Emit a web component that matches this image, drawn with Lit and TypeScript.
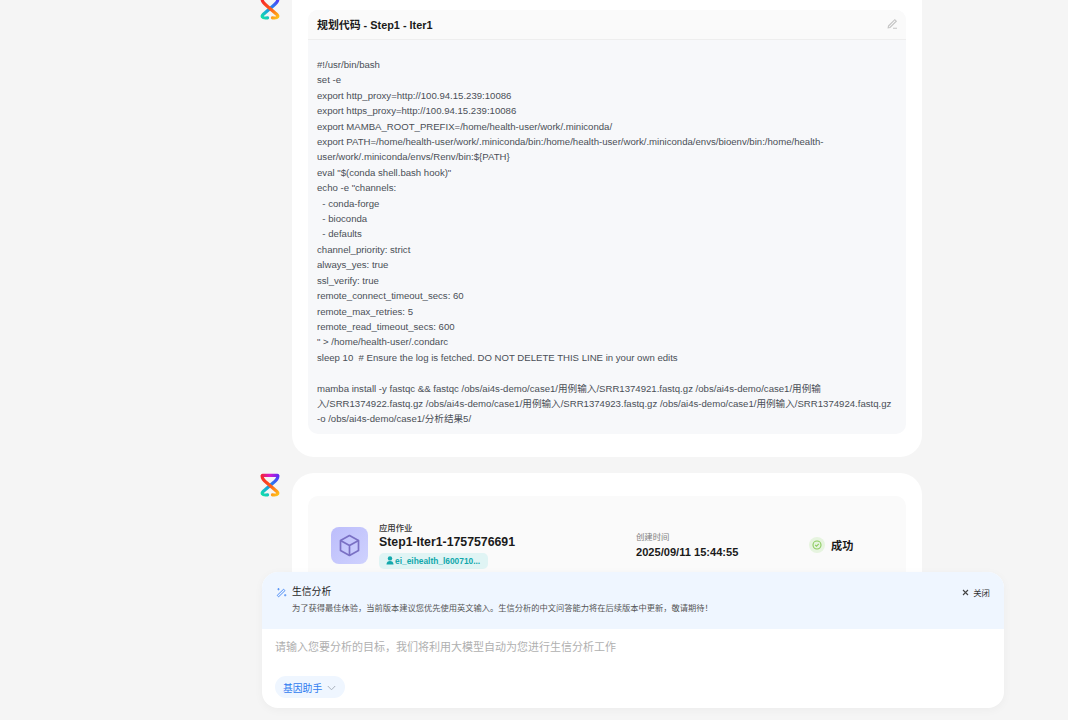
import { LitElement, html, css, svg } from "lit";
import { customElement } from "lit/decorators.js";

const CODE = `#!/usr/bin/bash
set -e
export http_proxy=http://100.94.15.239:10086
export https_proxy=http://100.94.15.239:10086
export MAMBA_ROOT_PREFIX=/home/health-user/work/.miniconda/
export PATH=/home/health-user/work/.miniconda/bin:/home/health-user/work/.miniconda/envs/bioenv/bin:/home/health-user/work/.miniconda/envs/Renv/bin:\${PATH}
eval "$(conda shell.bash hook)"
echo -e "channels:
  - conda-forge
  - bioconda
  - defaults
channel_priority: strict
always_yes: true
ssl_verify: true
remote_connect_timeout_secs: 60
remote_max_retries: 5
remote_read_timeout_secs: 600
" > /home/health-user/.condarc
sleep 10  # Ensure the log is fetched. DO NOT DELETE THIS LINE in your own edits

mamba install -y fastqc && fastqc /obs/ai4s-demo/case1/用例输入/SRR1374921.fastq.gz /obs/ai4s-demo/case1/用例输入/SRR1374922.fastq.gz /obs/ai4s-demo/case1/用例输入/SRR1374923.fastq.gz /obs/ai4s-demo/case1/用例输入/SRR1374924.fastq.gz -o /obs/ai4s-demo/case1/分析结果5/`;

const logo = (id: string) => html`<svg class="logo" viewBox="0 0 20 24" width="20" height="24" fill="none" stroke-width="3.2" stroke-linecap="round" stroke-linejoin="round">
  <defs>
    <linearGradient id="${id}a" gradientUnits="userSpaceOnUse" x1="1" y1="0" x2="19" y2="0"><stop offset="0" stop-color="#f5222d"/><stop offset=".5" stop-color="#d41ad0"/><stop offset="1" stop-color="#5a2cf5"/></linearGradient>
    <linearGradient id="${id}b" gradientUnits="userSpaceOnUse" x1="2" y1="2" x2="18" y2="22"><stop offset="0" stop-color="#f5222d"/><stop offset=".55" stop-color="#ff5a1a"/><stop offset="1" stop-color="#ffc21a"/></linearGradient>
    <linearGradient id="${id}c" gradientUnits="userSpaceOnUse" x1="18" y1="2" x2="2" y2="22"><stop offset="0" stop-color="#5b30f5"/><stop offset=".5" stop-color="#1c8cf0"/><stop offset="1" stop-color="#12e0a8"/></linearGradient>
  </defs>
  <path stroke="url(#${id}c)" d="M17.800 3C18.200 5.500 16 7.500 13 10L6 16C3 18.500 1.500 19.500 2.500 21C3.300 22.400 6 22 7.500 21.800"/>
  <path stroke="url(#${id}b)" d="M2.200 3C1.800 5.500 4 7.500 7 10L14 16C17 18.500 18.500 19.500 17.500 21C16.700 22.400 14 22 12.500 21.800"/>
  <path stroke="url(#${id}a)" d="M2.500 2.300H17.500"/>
</svg>`;

const cube = svg`<path d="M12.500 2.500 21.500 7.500v10L12.500 22.500 3.500 17.500v-10Z"/><path d="M3.500 7.500l9 5 9-5M12.500 12.500v10"/>`;

@customElement("app-root")
export class AppRoot extends LitElement {
  static styles = css`
    :host {
      display: block;
      height: 720px;
      overflow: hidden;
      position: relative;
      background: #f5f5f5;
      font-family: "Liberation Sans", "Noto Sans CJK SC", sans-serif;
    }
    .feed {
      display: flex;
      flex-direction: column;
      gap: 16px;
      width: 662px;
      margin: -30px 0 0 260px;
    }
    .msg {
      display: flex;
      gap: 12px;
      align-items: flex-start;
    }
    .logo {
      flex: none;
      display: block;
    }
    .bubble {
      flex: none;
      box-sizing: border-box;
      width: 630px;
      background: #fff;
      border-radius: 22px;
      padding: 23px 16px 23px;
    }
    .msg.first .bubble {
      padding-top: 40px;
    }
    .msg.first .logo {
      margin-top: 26px;
    }
    .msg.second .bubble {
      height: 220px;
    }
    .code-card {
      border-radius: 10px;
      background: #f7f8fa;
      overflow: hidden;
    }
    .code-head {
      display: flex;
      align-items: center;
      justify-content: space-between;
      height: 30px;
      box-sizing: border-box;
      padding: 0 8px 2px 9px;
      background: #fafafa;
      border-bottom: 1px solid #eeeeee;
      color: #1a1a1a;
      font-size: 10.9px;
      font-weight: 700;
    }
    .code-head svg {
      display: block;
    }
    pre {
      margin: 0;
      padding: 17px 9px 7px;
      font: inherit;
      font-size: 9.6px;
      line-height: 15.4px;
      color: #4a4f57;
      white-space: pre-wrap;
      word-break: break-word;
    }
    .job-card {
      display: flex;
      align-items: center;
      height: 100px;
      background: #fafafa;
      border-radius: 10px;
      padding: 0 23px;
      box-sizing: border-box;
    }
    .job-icon {
      flex: none;
      width: 37px;
      height: 37px;
      border-radius: 8px;
      background: linear-gradient(135deg, #bcbdfb, #cfd2fe);
      display: flex;
      align-items: center;
      justify-content: center;
    }
    .job-icon svg {
      fill: none;
      stroke: #7a70c4;
      stroke-width: 1.7;
      stroke-linejoin: round;
    }
    .job-info {
      width: 257px;
      margin-left: 11px;
      display: flex;
      flex-direction: column;
      align-items: flex-start;
    }
    .job-kind {
      font-size: 8.4px;
      font-weight: 500;
      line-height: 11px;
      color: #333;
    }
    .job-name {
      font-size: 12.3px;
      font-weight: 700;
      line-height: 17px;
      color: #1a1a1a;
    }
    .job-user {
      display: flex;
      align-items: center;
      gap: 1px;
      margin-top: 2px;
      height: 16px;
      padding: 0 8px 0 7px;
      border-radius: 5px;
      background: #e0f4f4;
      color: #12a8ac;
      font-size: 8.4px;
      font-weight: 700;
    }
    .job-time {
      width: 173px;
      display: flex;
      flex-direction: column;
    }
    .job-time small {
      font-size: 8.4px;
      line-height: 13px;
      color: #808080;
    }
    .job-time b {
      font-size: 11.1px;
      line-height: 17px;
      color: #1a1a1a;
    }
    .status {
      display: flex;
      align-items: center;
      gap: 6px;
      margin-top: -2px;
      font-size: 11.2px;
      font-weight: 700;
      color: #1a1a1a;
    }
    .status i {
      width: 16px;
      height: 16px;
      border-radius: 50%;
      background: #e6f4df;
      display: flex;
      align-items: center;
      justify-content: center;
    }
    .composer {
      position: absolute;
      left: 262px;
      top: 572px;
      width: 742px;
      height: 136px;
      border-radius: 16px;
      background: #fff;
      overflow: hidden;
      box-shadow: 0 2px 10px rgba(0, 0, 0, 0.04);
      display: flex;
      flex-direction: column;
    }
    .notice {
      flex: none;
      height: 57px;
      box-sizing: border-box;
      background: #eff6ff;
      padding: 13px 14px 0;
      display: grid;
      grid-template-columns: 16px 1fr auto;
      grid-template-rows: 14px 18px;
      row-gap: 1px;
      align-items: center;
    }
    .notice-title {
      font-size: 9.8px;
      line-height: 14px;
      color: #1f1f1f;
    }
    .notice-text {
      grid-column: 2 / 4;
      font-size: 8.25px;
      line-height: 18px;
      color: #555;
    }
    .close {
      display: flex;
      align-items: center;
      gap: 4px;
      font-size: 8.4px;
      color: #333;
    }
    .input {
      flex: 1;
      padding: 10px 13px 0;
      font-size: 11px;
      line-height: 16px;
      color: #b0b0b0;
    }
    .tool {
      align-self: flex-start;
      display: flex;
      align-items: center;
      gap: 5px;
      height: 22px;
      box-sizing: border-box;
      margin: 0 0 10px 13px;
      padding: 1px 9px 0 8px;
      border-radius: 11px;
      background: #eff6ff;
      color: #2f7cf0;
      font-size: 9.8px;
    }
  `;

  render() {
    return html`
      <div class="feed">
        <div class="msg first">
          ${logo("l1")}
          <div class="bubble">
            <div class="code-card">
              <div class="code-head">
                <span>规划代码 - Step1 - Iter1</span>
                <svg width="11" height="11" viewBox="0 0 11 11" fill="none" stroke="#c4c4c4" stroke-width="1.1"><path d="M1.500 8 7.800 1.700l1.500 1.500L3 9.500l-1.800.3Z"/><path d="M6 10.300h4"/></svg>
              </div>
              <pre>${CODE}</pre>
            </div>
          </div>
        </div>
        <div class="msg second">
          ${logo("l2")}
          <div class="bubble">
            <div class="job-card">
              <div class="job-icon"><svg width="25" height="25" viewBox="0 0 25 25">${cube}</svg></div>
              <div class="job-info">
                <span class="job-kind">应用作业</span>
                <span class="job-name">Step1-Iter1-1757576691</span>
                <span class="job-user"><svg width="8" height="9" viewBox="0 0 8 9" fill="#12a8ac"><circle cx="4" cy="2.400" r="2.200"/><path d="M.5 8.600C.5 6 2 5 4 5s3.500 1 3.500 3.600Z"/></svg>ei_eihealth_l600710...</span>
              </div>
              <div class="job-time">
                <small>创建时间</small>
                <b>2025/09/11 15:44:55</b>
              </div>
              <div class="status">
                <i><svg width="10" height="10" viewBox="0 0 10 10" fill="none" stroke="#8ccc5e" stroke-width="1.1"><circle cx="5" cy="5" r="4"/><path d="M3.200 5 4.500 6.200 6.800 3.800"/></svg></i>
                成功
              </div>
            </div>
          </div>
        </div>
      </div>
      <div class="composer">
        <div class="notice">
          <svg width="11" height="11" viewBox="0 0 11 11" fill="none" stroke="#4d8df5" stroke-width="1"><path d="M1.200 8.400 7.600 2.200 9 3.600 2.600 9.800Z"/><path d="M2.500 1v2.400M1.300 2.200h2.400M9.200 7v2.400M8 8.200h2.400" stroke-width=".8"/></svg>
          <span class="notice-title">生信分析</span>
          <span class="close"><svg width="7" height="7" viewBox="0 0 7 7" stroke="#444" stroke-width="1.1"><path d="M1 1l5 5M6 1 1 6"/></svg>关闭</span>
          <span></span>
          <span class="notice-text">为了获得最佳体验，当前版本建议您优先使用英文输入。生信分析的中文问答能力将在后续版本中更新，敬请期待！</span>
        </div>
        <div class="input">请输入您要分析的目标，我们将利用大模型自动为您进行生信分析工作</div>
        <div class="tool">基因助手<svg width="9" height="6" viewBox="0 0 9 6" fill="none" stroke="#a9b2bf" stroke-width="1"><path d="M.8 1 4.500 4.800 8.200 1"/></svg></div>
      </div>
    `;
  }
}
